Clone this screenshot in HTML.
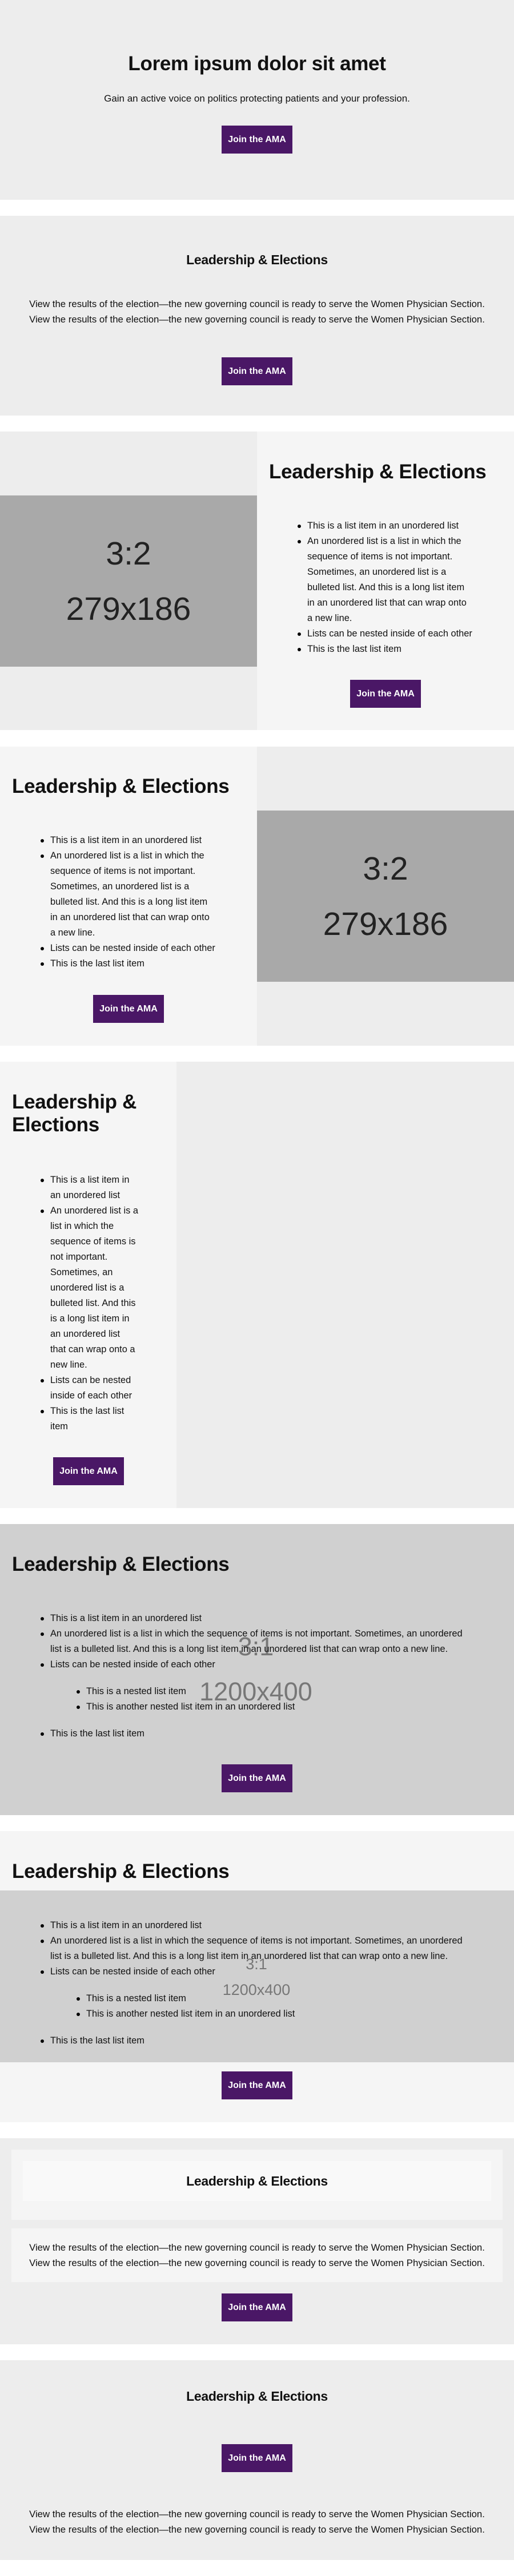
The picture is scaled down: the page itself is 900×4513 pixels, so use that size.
<!DOCTYPE html>
<html><head><meta charset="utf-8"><style>
*{margin:0;padding:0;box-sizing:border-box}
body{width:900px;height:4513px;background:#fff;position:relative;font-family:"Liberation Sans",Arial,sans-serif;color:#111;overflow:hidden}
.a{position:absolute}
.bg{position:absolute;left:0;width:900px}
.c{position:absolute;text-align:center;white-space:nowrap}
.btn{position:absolute;width:124px;height:49px;background:#4a1766;color:#fff;font-weight:bold;font-size:16px;line-height:49px;text-align:center;white-space:nowrap}
h2{font-weight:bold;font-size:35px;white-space:nowrap;letter-spacing:-0.3px}
.h2s{font-weight:bold;font-size:23px;letter-spacing:-0.3px}
ul{list-style:none;position:absolute;font-size:16.4px;line-height:27px;white-space:nowrap}
li{position:relative;padding-left:13px}
li::before{content:"";position:absolute;left:-4px;top:11px;width:6px;height:6px;border-radius:50%;background:#000}
ul ul{position:static;margin:20px 0 20px 50px}
.ph{position:absolute;font-family:"Liberation Sans",Arial,sans-serif;text-align:center;white-space:nowrap}
p.t{font-size:16.8px;line-height:27px;text-align:center;white-space:nowrap}
</style></head><body>

<!-- S1 -->
<div class="bg" style="top:0;height:350px;background:#ededed"></div>
<div class="c" style="left:0;width:900px;top:90px;font-size:35px;font-weight:bold;line-height:44px;letter-spacing:-0.3px">Lorem ipsum dolor sit amet</div>
<div class="c" style="left:0;width:900px;top:163px;font-size:17px;line-height:20px">Gain an active voice on politics protecting patients and your profession.</div>
<div class="btn" style="left:388px;top:220px">Join the AMA</div>

<!-- S2 -->
<div class="bg" style="top:378px;height:350px;background:#ededed"></div>
<div class="c h2s" style="left:0;width:900px;top:440px;line-height:30px">Leadership &amp; Elections</div>
<div class="a" style="left:0;width:900px;top:519px"><p class="t">View the results of the election—the new governing council is ready to serve the Women Physician Section.<br>View the results of the election—the new governing council is ready to serve the Women Physician Section.</p></div>
<div class="btn" style="left:388px;top:626px">Join the AMA</div>

<!-- S3 -->
<div class="bg" style="top:756px;height:523px;background:#ededed"></div>
<div class="a" style="left:450px;top:756px;width:450px;height:523px;background:#f5f5f5"></div>
<div class="a" style="left:0;top:868px;width:450px;height:300px;background:#a9a9a9"></div>
<div class="ph" style="left:0;width:450px;top:935px;font-size:57px;line-height:70px;color:#222">3:2</div>
<div class="ph" style="left:0;width:450px;top:1032px;font-size:57px;line-height:70px;color:#222">279x186</div>
<h2 class="a" style="left:471px;top:806px;line-height:42px">Leadership &amp; Elections</h2>
<ul style="left:525px;top:908px">
<li>This is a list item in an unordered list</li>
<li>An unordered list is a list in which the<br>sequence of items is not important.<br>Sometimes, an unordered list is a<br>bulleted list. And this is a long list item<br>in an unordered list that can wrap onto<br>a new line.</li>
<li>Lists can be nested inside of each other</li>
<li>This is the last list item</li>
</ul>
<div class="btn" style="left:613px;top:1191px">Join the AMA</div>

<!-- S4 -->
<div class="bg" style="top:1308px;height:524px;background:#ededed"></div>
<div class="a" style="left:0;top:1308px;width:450px;height:524px;background:#f5f5f5"></div>
<div class="a" style="left:450px;top:1420px;width:450px;height:300px;background:#a9a9a9"></div>
<div class="ph" style="left:450px;width:450px;top:1487px;font-size:57px;line-height:70px;color:#222">3:2</div>
<div class="ph" style="left:450px;width:450px;top:1584px;font-size:57px;line-height:70px;color:#222">279x186</div>
<h2 class="a" style="left:21px;top:1357px;line-height:42px">Leadership &amp; Elections</h2>
<ul style="left:75px;top:1459px">
<li>This is a list item in an unordered list</li>
<li>An unordered list is a list in which the<br>sequence of items is not important.<br>Sometimes, an unordered list is a<br>bulleted list. And this is a long list item<br>in an unordered list that can wrap onto<br>a new line.</li>
<li>Lists can be nested inside of each other</li>
<li>This is the last list item</li>
</ul>
<div class="btn" style="left:163px;top:1743px">Join the AMA</div>

<!-- S5 -->
<div class="bg" style="top:1860px;height:782px;background:#ededed"></div>
<div class="a" style="left:0;top:1860px;width:309px;height:782px;background:#f5f5f5"></div>
<h2 class="a" style="left:21px;top:1911px;line-height:40px">Leadership &amp;<br>Elections</h2>
<ul style="left:75px;top:2054px">
<li>This is a list item in<br>an unordered list</li>
<li>An unordered list is a<br>list in which the<br>sequence of items is<br>not important.<br>Sometimes, an<br>unordered list is a<br>bulleted list. And this<br>is a long list item in<br>an unordered list<br>that can wrap onto a<br>new line.</li>
<li>Lists can be nested<br>inside of each other</li>
<li>This is the last list<br>item</li>
</ul>
<div class="btn" style="left:93px;top:2553px">Join the AMA</div>

<!-- S6 -->
<div class="bg" style="top:2670px;height:510px;background:#d0d0d0"></div>
<h2 class="a" style="left:21px;top:2720px;line-height:42px">Leadership &amp; Elections</h2>
<div class="ph" style="left:248px;width:400px;top:2857px;font-size:45px;line-height:56px;color:#777">3:1</div>
<div class="ph" style="left:248px;width:400px;top:2936px;font-size:45px;line-height:56px;color:#777">1200x400</div>
<ul style="left:75px;top:2822px">
<li>This is a list item in an unordered list</li>
<li>An unordered list is a list in which the sequence of items is not important. Sometimes, an unordered<br>list is a bulleted list. And this is a long list item in an unordered list that can wrap onto a new line.</li>
<li>Lists can be nested inside of each other
<ul><li>This is a nested list item</li><li>This is another nested list item in an unordered list</li></ul></li>
<li>This is the last list item</li>
</ul>
<div class="btn" style="left:388px;top:3091px">Join the AMA</div>

<!-- S7 -->
<div class="bg" style="top:3208px;height:510px;background:#f5f5f5"></div>
<div class="bg" style="top:3312px;height:301px;background:#d0d0d0"></div>
<h2 class="a" style="left:21px;top:3258px;line-height:42px">Leadership &amp; Elections</h2>
<div class="ph" style="left:249px;width:400px;top:3424px;font-size:27px;line-height:34px;color:#777">3:1</div>
<div class="ph" style="left:249px;width:400px;top:3469px;font-size:27px;line-height:34px;color:#777">1200x400</div>
<ul style="left:75px;top:3360px">
<li>This is a list item in an unordered list</li>
<li>An unordered list is a list in which the sequence of items is not important. Sometimes, an unordered<br>list is a bulleted list. And this is a long list item in an unordered list that can wrap onto a new line.</li>
<li>Lists can be nested inside of each other
<ul><li>This is a nested list item</li><li>This is another nested list item in an unordered list</li></ul></li>
<li>This is the last list item</li>
</ul>
<div class="btn" style="left:388px;top:3629px">Join the AMA</div>

<!-- S8 -->
<div class="bg" style="top:3746px;height:361px;background:#ededed"></div>
<div class="a" style="left:20px;top:3766px;width:860px;height:123px;background:#f5f5f5"></div>
<div class="a" style="left:40px;top:3786px;width:820px;height:70px;background:#f9f9f9"></div>
<div class="c h2s" style="left:0;width:900px;top:3806px;line-height:30px">Leadership &amp; Elections</div>
<div class="a" style="left:20px;top:3904px;width:860px;height:94px;background:#f5f5f5"></div>
<div class="a" style="left:0;width:900px;top:3924px"><p class="t">View the results of the election—the new governing council is ready to serve the Women Physician Section.<br>View the results of the election—the new governing council is ready to serve the Women Physician Section.</p></div>
<div class="btn" style="left:388px;top:4018px">Join the AMA</div>

<!-- S9 -->
<div class="bg" style="top:4135px;height:350px;background:#ededed"></div>
<div class="c h2s" style="left:0;width:900px;top:4183px;line-height:30px">Leadership &amp; Elections</div>
<div class="btn" style="left:388px;top:4282px">Join the AMA</div>
<div class="a" style="left:0;width:900px;top:4391px"><p class="t">View the results of the election—the new governing council is ready to serve the Women Physician Section.<br>View the results of the election—the new governing council is ready to serve the Women Physician Section.</p></div>

</body></html>
